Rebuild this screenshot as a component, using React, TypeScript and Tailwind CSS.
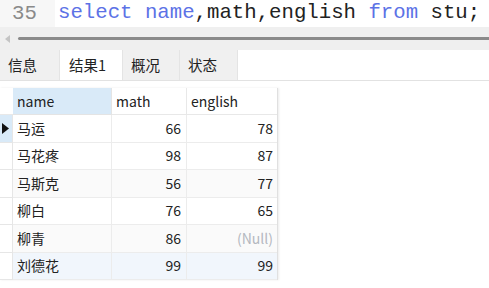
const rows: { name: string; math: string; english: string | null }[] = [
  { name: "马运", math: "66", english: "78" },
  { name: "马花疼", math: "98", english: "87" },
  { name: "马斯克", math: "56", english: "77" },
  { name: "柳白", math: "76", english: "65" },
  { name: "柳青", math: "86", english: null },
  { name: "刘德花", math: "99", english: "99" },
];

const tabs = ["信息", "结果1", "概况", "状态"];
const tabWidths = ["w-[60px]", "w-[63px]", "w-[57px]", "w-[58px]"];

const cjk = { fontFamily: '"Noto Sans CJK SC", "Noto Sans", sans-serif' };

export default function App() {
  return (
    <div className="flex h-[288px] w-[489px] flex-col overflow-hidden bg-white text-[#222]" style={cjk}>
      {/* editor line */}
      <div className="flex h-[27px] shrink-0 items-center" style={{ fontFamily: '"Liberation Mono", monospace' }}>
        <div className="flex h-full w-[55px] items-center bg-[#f7f7f7] pl-[12px] text-[20.7px] text-[#8a8a8a]">35</div>
        <div className="whitespace-pre pl-[3px] text-[20.7px] leading-none text-[#222]">
          <span className="text-[#5c72e6]">select</span> <span className="text-[#5c72e6]">name</span>,math,english{" "}
          <span className="text-[#5c72e6]">from</span> stu;
        </div>
      </div>

      {/* horizontal scrollbar */}
      <div className="flex h-[23px] shrink-0 items-center gap-[7px] bg-[#efefef] pl-[5px]">
        <svg width="6" height="8" viewBox="0 0 6 8">
          <path d="M5 0 L0 4 L5 8 Z" fill="#c4c4c4" />
        </svg>
        <div className="h-[3px] flex-1 rounded-l-full bg-[#8a8a8a]" />
      </div>

      {/* tabs */}
      <div className="flex h-[31px] shrink-0 border-b border-[#e2e2e2]">
        {tabs.map((t, i) => (
          <div
            key={t}
            className={`flex h-full items-center border-r border-[#e4e4e4] pl-[8px] text-[14.5px] ${tabWidths[i]} ${
              i === 1 ? "bg-white pl-[9px]" : "bg-[#f0f0f0]"
            }`}
          >
            {t}
          </div>
        ))}
      </div>

      {/* result grid */}
      <div className="pt-[7px]">
        <div className="grid w-[278px] grid-cols-[13px_99px_75px_90px] border-r border-[#e0e0e0] text-[14px] shadow-[1px_0_2px_rgba(0,0,0,0.08)]">
          <div className="h-[27px] border-b border-[#e8e8e8] bg-white" />
          <div className="flex h-[27px] items-center border-b border-r border-[#e4e4e4] bg-[#d9eaf8] pl-[4px]">name</div>
          <div className="flex h-[27px] items-center border-b border-r border-[#e8e8e8] pl-[4px]">math</div>
          <div className="flex h-[27px] items-center border-b border-[#e8e8e8] pl-[4px]">english</div>
          {rows.map((r, i) => {
            const bg = i === 5 ? "bg-[#f1f6fc]" : i === 2 || i === 4 ? "bg-[#fafafa]" : "bg-white";
            return (
              <div key={r.name} className="contents">
                <div
                  className={`flex h-[27.5px] items-center border-b border-r border-[#e6e6e6] pl-[2px] ${
                    i === 0 ? "bg-[#d9eaf8]" : "bg-white"
                  }`}
                >
                  {i === 0 && (
                    <svg width="7" height="11" viewBox="0 0 7 11">
                      <path d="M0 0 L7 5.5 L0 11 Z" fill="#111" />
                    </svg>
                  )}
                </div>
                <div className={`flex h-[27.5px] items-center border-b border-r border-[#ececec] pl-[4px] ${bg}`}>{r.name}</div>
                <div className={`flex h-[27.5px] items-center justify-end border-b border-r border-[#ececec] pr-[5px] ${bg}`}>{r.math}</div>
                <div className={`flex h-[27.5px] items-center justify-end border-b border-[#ececec] pr-[4px] ${bg}`}>
                  {r.english ?? <span className="text-[#b4b8c0]">(Null)</span>}
                </div>
              </div>
            );
          })}
        </div>
      </div>
    </div>
  );
}
